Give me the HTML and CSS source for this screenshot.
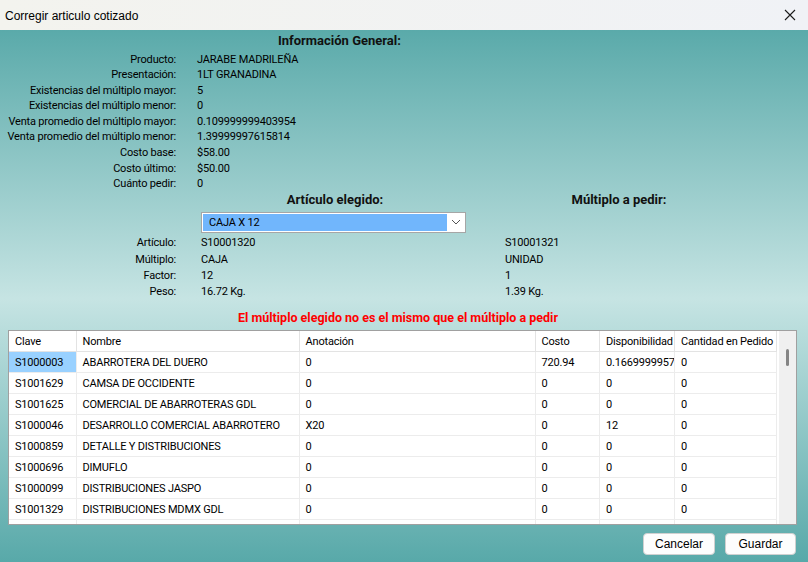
FILE: index.html
```html
<!DOCTYPE html>
<html lang="es">
<head>
<meta charset="utf-8">
<title>Corregir articulo cotizado</title>
<link rel="stylesheet" href="styles.css">
</head>
<body>
<div class="window">
  <div class="titlebar">
    <span class="title">Corregir articulo cotizado</span>
    <svg class="close" width="12" height="12" viewBox="0 0 12 12"><path d="M1 1 L11 11 M11 1 L1 11" stroke="#1a1a1a" stroke-width="1.1" fill="none"/></svg>
  </div>
  <div class="content">
    <div class="info-title">Información General:</div>
    <div class="info-grid">
      <div class="lbl">Producto:</div><div class="val">JARABE MADRILEÑA</div>
      <div class="lbl">Presentación:</div><div class="val">1LT GRANADINA</div>
      <div class="lbl">Existencias del múltiplo mayor:</div><div class="val">5</div>
      <div class="lbl">Existencias del múltiplo menor:</div><div class="val">0</div>
      <div class="lbl">Venta promedio del múltiplo mayor:</div><div class="val">0.109999999403954</div>
      <div class="lbl">Venta promedio del múltiplo menor:</div><div class="val">1.39999997615814</div>
      <div class="lbl">Costo base:</div><div class="val">$58.00</div>
      <div class="lbl">Costo último:</div><div class="val">$50.00</div>
      <div class="lbl">Cuánto pedir:</div><div class="val">0</div>
    </div>

    <div class="detail">
      <div></div>
      <div class="col-title t1">Artículo elegido:</div>
      <div class="col-title t2">Múltiplo a pedir:</div>

      <div></div>
      <div class="combo">
        <span class="combo-sel">CAJA X 12</span>
        <span class="combo-btn"><svg width="10" height="6" viewBox="0 0 10 6"><path d="M1 1 L5 5 L9 1" stroke="#555" stroke-width="1" fill="none"/></svg></span>
      </div>
      <div></div>

      <div class="lbl d">Artículo:</div><div class="dval">S10001320</div><div class="dval">S10001321</div>
      <div class="lbl d">Múltiplo:</div><div class="dval">CAJA</div><div class="dval">UNIDAD</div>
      <div class="lbl d">Factor:</div><div class="dval">12</div><div class="dval">1</div>
      <div class="lbl d">Peso:</div><div class="dval">16.72 Kg.</div><div class="dval">1.39 Kg.</div>
    </div>

    <div class="warning">El múltiplo elegido no es el mismo que el múltiplo a pedir</div>

    <div class="grid-box">
      <div class="table-wrap">
        <table class="data">
          <colgroup>
            <col class="c1"><col class="c2"><col class="c3"><col class="c4"><col class="c5"><col class="c6">
          </colgroup>
          <thead>
            <tr><th>Clave</th><th>Nombre</th><th>Anotación</th><th>Costo</th><th>Disponibilidad</th><th>Cantidad en Pedido</th></tr>
          </thead>
          <tbody>
            <tr><td class="selected">S1000003</td><td>ABARROTERA DEL DUERO</td><td>0</td><td>720.94</td><td>0.1669999957</td><td>0</td></tr>
            <tr><td>S1001629</td><td>CAMSA DE OCCIDENTE</td><td>0</td><td>0</td><td>0</td><td>0</td></tr>
            <tr><td>S1001625</td><td>COMERCIAL DE ABARROTERAS GDL</td><td>0</td><td>0</td><td>0</td><td>0</td></tr>
            <tr><td>S1000046</td><td>DESARROLLO COMERCIAL ABARROTERO</td><td>X20</td><td>0</td><td>12</td><td>0</td></tr>
            <tr><td>S1000859</td><td>DETALLE Y DISTRIBUCIONES</td><td>0</td><td>0</td><td>0</td><td>0</td></tr>
            <tr><td>S1000696</td><td>DIMUFLO</td><td>0</td><td>0</td><td>0</td><td>0</td></tr>
            <tr><td>S1000099</td><td>DISTRIBUCIONES JASPO</td><td>0</td><td>0</td><td>0</td><td>0</td></tr>
            <tr><td>S1001329</td><td>DISTRIBUCIONES MDMX GDL</td><td>0</td><td>0</td><td>0</td><td>0</td></tr>
            <tr class="partial"><td></td><td></td><td></td><td></td><td></td><td></td></tr>
          </tbody>
        </table>
      </div>
      <div class="scrollbar"><div class="thumb"></div></div>
    </div>

    <div class="buttons">
      <button class="btn">Cancelar</button>
      <button class="btn">Guardar</button>
    </div>
  </div>
</div>
</body>
</html>
```

FILE: styles.css
```css
* { box-sizing: border-box; }

html, body {
  margin: 0;
  padding: 0;
}

body {
  width: 808px;
  height: 562px;
  overflow: hidden;
  font-family: Roboto, "Liberation Sans", sans-serif;
  font-size: 11px;
  letter-spacing: -0.18px;
  color: #000;
}

.window {
  width: 808px;
  height: 562px;
  display: flex;
  flex-direction: column;
}

.titlebar {
  height: 30px;
  flex: 0 0 30px;
  display: flex;
  align-items: center;
  justify-content: space-between;
  padding: 0 12px 0 5px;
  background: linear-gradient(to right, #f3f3ee, #f0f2f6);
}

.title {
  font-family: "Liberation Sans", Arial, sans-serif;
  font-size: 12px;
  letter-spacing: 0;
  color: #000;
  padding-top: 1px;
}

.close {
  display: block;
}

.content {
  flex: 1;
  display: flex;
  flex-direction: column;
  padding-top: 3px;
  background: linear-gradient(to bottom, #5aaaaa 0%, #c6e4e3 50.5%, #58a9a9 100%);
}

.info-title {
  margin-left: 278px;
  font-weight: bold;
  font-size: 13px;
  letter-spacing: 0;
  line-height: 16px;
  color: #111;
  margin-bottom: 2.5px;
}

.info-grid {
  display: grid;
  grid-template-columns: 176px 1fr;
  column-gap: 21px;
  grid-auto-rows: 15.6px;
  line-height: 15.6px;
}

.lbl {
  text-align: right;
  white-space: nowrap;
}

.val {
  white-space: nowrap;
}

.detail {
  display: grid;
  grid-template-columns: 176px 279px 1fr;
  column-gap: 25px;
  margin-top: 0;
}

.col-title {
  font-weight: bold;
  font-size: 13px;
  letter-spacing: 0;
  line-height: 16px;
  color: #111;
  text-align: center;
}

.t1 { width: 268px; }
.t2 { width: 228px; }

.combo {
  margin-top: 4px;
  margin-bottom: 2.5px;
  width: 265px;
  height: 21px;
  border: 1px solid #a6a6a6;
  background: #fff;
  display: flex;
  align-items: stretch;
  padding: 1px;
}

.combo-sel {
  flex: 1;
  background: #71b6fc;
  padding-left: 6px;
  line-height: 17px;
  color: #000;
}

.combo-btn {
  width: 17px;
  display: flex;
  align-items: center;
  justify-content: center;
}

.d, .dval {
  line-height: 16.2px;
  height: 16.2px;
  white-space: nowrap;
}

.warning {
  margin-top: 10px;
  padding-right: 12px;
  text-align: center;
  color: #ff0000;
  font-weight: bold;
  font-size: 12.5px;
  letter-spacing: 0;
  line-height: 16px;
}

.grid-box {
  margin: 3.5px 11px 0 8px;
  height: 195px;
  border: 1px solid #a0a0a0;
  background: #fff;
  display: flex;
}

.table-wrap {
  width: 770px;
  overflow: hidden;
}

.data {
  width: 767px;
  table-layout: fixed;
  border-collapse: collapse;
}

.c1 { width: 67px; }
.c2 { width: 223px; }
.c3 { width: 236px; }
.c4 { width: 64.5px; }
.c5 { width: 75px; }
.c6 { width: 101.5px; }

.data th,
.data td {
  height: 21px;
  padding: 1px 0 0 6px;
  text-align: left;
  font-weight: normal;
  white-space: nowrap;
  overflow: hidden;
  text-overflow: clip;
  border-right: 1px solid #ececec;
  border-bottom: 1px solid #ececec;
}

.data th {
  border-right-color: #e3e3e3;
  border-bottom-color: #e3e3e3;
}

.data td.selected {
  background: #99d1ff;
  background-clip: padding-box;
}

.scrollbar {
  width: 17px;
  background: #f0f0f0;
}

.thumb {
  width: 3px;
  height: 17px;
  margin: 18px 0 0 7px;
  background: #858585;
  border-radius: 2px;
}

.buttons {
  display: flex;
  justify-content: flex-end;
  gap: 10px;
  padding-right: 12px;
  margin-top: 8.5px;
}

.btn {
  height: 22px;
  width: 72px;
  border: 1px solid #d0d0d0;
  border-radius: 4px;
  background: #fdfdfd;
  font-family: "Liberation Sans", Arial, sans-serif;
  font-size: 12px;
  letter-spacing: 0;
  color: #000;
  padding: 0;
}

.btn + .btn {
  width: 71px;
}
```
